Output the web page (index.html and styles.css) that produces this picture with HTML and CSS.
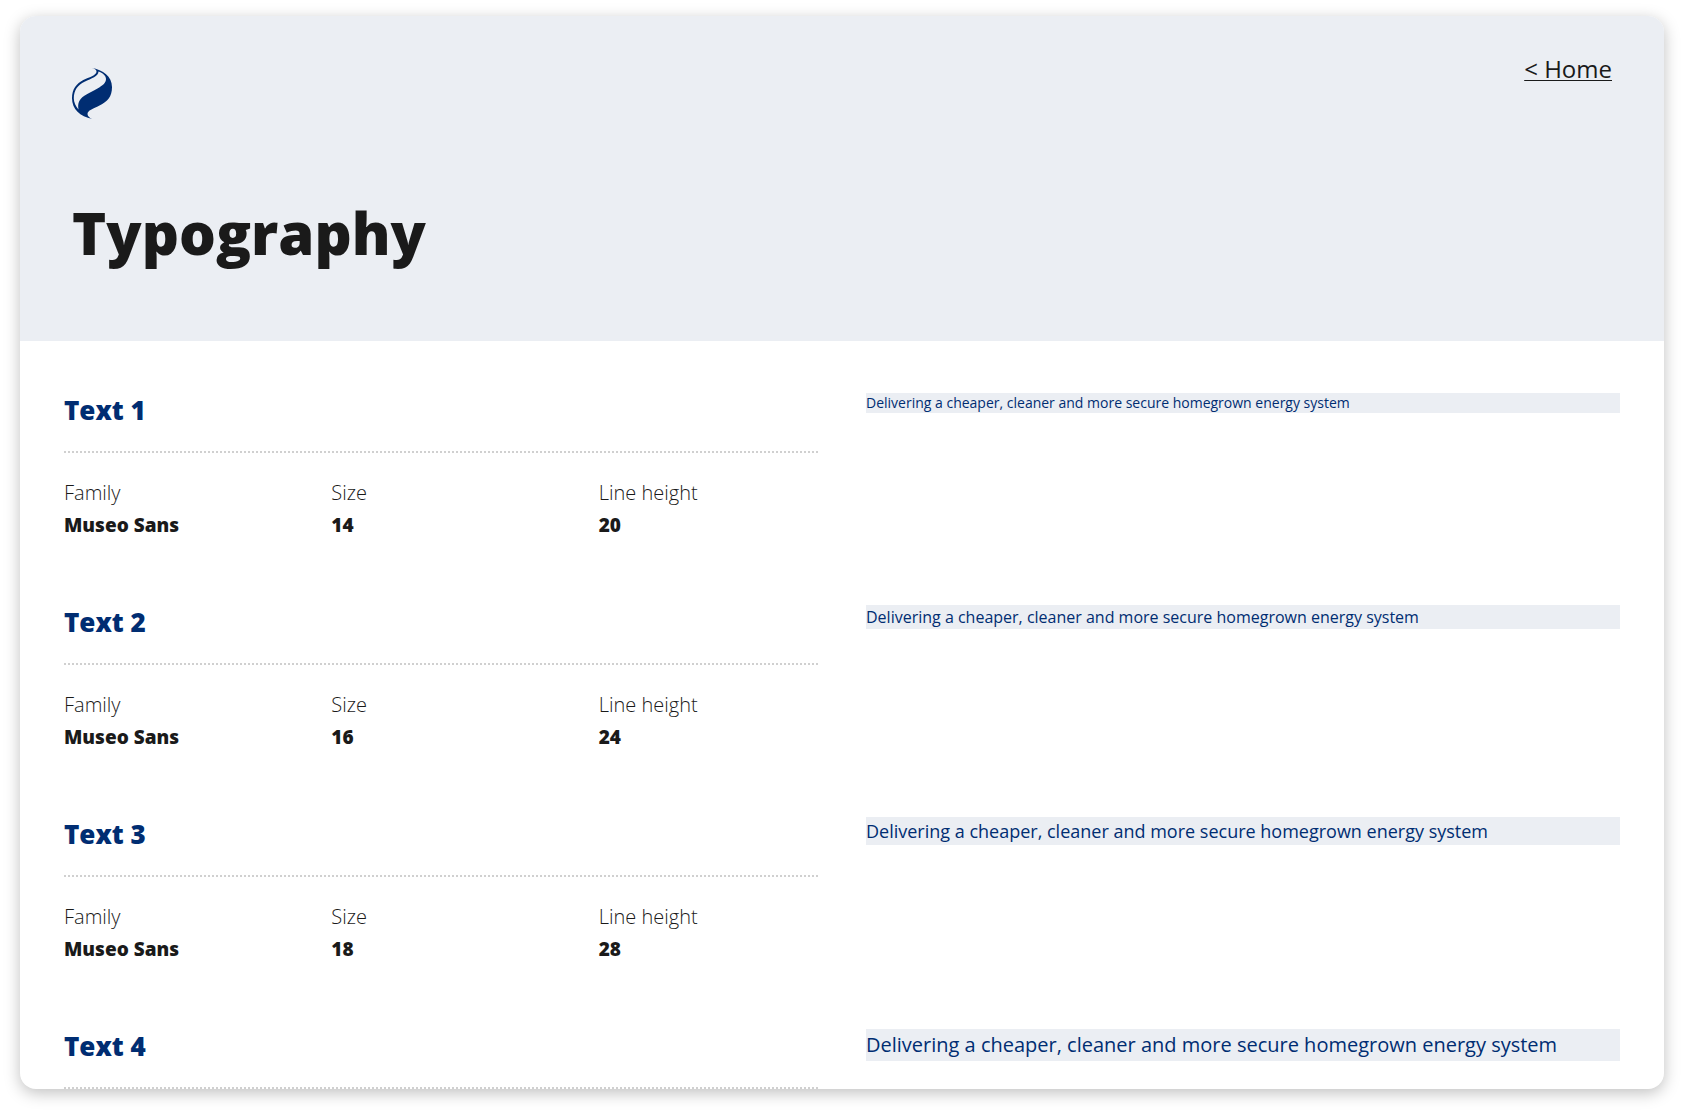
FILE: index.html
```
<!DOCTYPE html>
<html lang="en">
<head>
    <meta charset="UTF-8">
    <meta name="viewport" content="width=device-width, initial-scale=1.0">
    <title>Typography</title>
    <link rel="stylesheet" href="styles.css">
</head>
<body>
    <div class="page">
        <header class="header">
            <div class="header-top">
                <svg class="logo" viewBox="0 0 40 51" aria-hidden="true">
                    <path fill-rule="evenodd" d="M19.500 0C31 1.500 40 8.500 40 19C40 29 35.500 33.500 27.500 37.500C21 40.700 15.500 42.500 15.500 46C15.500 48.500 18 50 20.300 51C8 48.800 0 41 0 30.300C0 21 4.500 15.500 11.300 12C17 9.200 24.500 7.500 24.500 3.500C24.500 1.500 22.500 .5 19.500 0ZM26.500 3.500C26.300 8.300 19.500 10.600 12.500 13.700C6 16.800 1.800 22 1.800 30.300C1.800 34.500 3.800 38.500 6.500 41.500C5.500 35.500 7 31.500 12 28C16.500 25 20.500 23.500 25.500 20.500C30.500 17.500 34 15 34 11C34 7.500 30.500 5 26.500 3.500Z"/>
                </svg>
                <a class="home-link" href="#">&lt; Home</a>
            </div>
            <h1>Typography</h1>
        </header>

        <main class="content">
            <section class="type-row">
                <div class="details">
                    <h2>Text 1</h2>
                    <dl class="specs">
                        <div><dt>Family</dt><dd>Museo Sans</dd></div>
                        <div><dt>Size</dt><dd>14</dd></div>
                        <div><dt>Line height</dt><dd>20</dd></div>
                    </dl>
                </div>
                <p class="sample text-1">Delivering a cheaper, cleaner and more secure homegrown energy system</p>
            </section>

            <section class="type-row">
                <div class="details">
                    <h2>Text 2</h2>
                    <dl class="specs">
                        <div><dt>Family</dt><dd>Museo Sans</dd></div>
                        <div><dt>Size</dt><dd>16</dd></div>
                        <div><dt>Line height</dt><dd>24</dd></div>
                    </dl>
                </div>
                <p class="sample text-2">Delivering a cheaper, cleaner and more secure homegrown energy system</p>
            </section>

            <section class="type-row">
                <div class="details">
                    <h2>Text 3</h2>
                    <dl class="specs">
                        <div><dt>Family</dt><dd>Museo Sans</dd></div>
                        <div><dt>Size</dt><dd>18</dd></div>
                        <div><dt>Line height</dt><dd>28</dd></div>
                    </dl>
                </div>
                <p class="sample text-3">Delivering a cheaper, cleaner and more secure homegrown energy system</p>
            </section>

            <section class="type-row">
                <div class="details">
                    <h2>Text 4</h2>
                </div>
                <p class="sample text-4">Delivering a cheaper, cleaner and more secure homegrown energy system</p>
            </section>
        </main>
    </div>
</body>
</html>
```
FILE: styles.css
```
* {
    box-sizing: border-box;
}
body {
    margin: 0;
    padding: 16px 20px 24px;
    height: 100vh;
    font-family: "Museo Sans", "Open Sans", sans-serif;
    color: #1a1a1a;
    background: white;
}
h1, h2, p, dl, dd {
    margin: 0;
}
.page {
    height: 100%;
    overflow: hidden;
    background: white;
    border-radius: 16px;
    box-shadow: 0 4px 16px rgba(0,0,0,0.25);
}
.header {
    padding: 36px 52px 68px;
    background: #ebeef3;
}
.header-top {
    display: flex;
    justify-content: space-between;
    align-items: flex-start;
}
.logo {
    width: 40px;
    height: 51px;
    margin-top: 16px;
    fill: #002d72;
}
.home-link {
    color: #1a1a1a;
    font-size: 24px;
    line-height: 34px;
    text-underline-offset: 2px;
    text-decoration-thickness: 1px;
}
h1 {
    margin-top: 74px;
    font-size: 58px;
    line-height: 80px;
    font-weight: 800;
}
.content {
    padding: 52px 44px;
}
.type-row {
    display: grid;
    grid-template-columns: 1fr 1fr;
    gap: 48px;
    align-items: start;
    padding-bottom: 64px;
}
h2 {
    padding-bottom: 24px;
    border-bottom: 2px dotted #d0d0d0;
    font-size: 26px;
    line-height: 34px;
    font-weight: 800;
    color: #002d72;
}
.specs {
    display: grid;
    grid-template-columns: repeat(3, 1fr);
    gap: 48px;
    padding-top: 24px;
    font-size: 20px;
    line-height: 32px;
}
dt {
    font-weight: 300;
}
dd {
    font-size: 19px;
    font-weight: 800;
}
.sample {
    color: #002d72;
    background: #ebeef3;
}
.text-1 {
    font-size: 14px;
    line-height: 20px;
}
.text-2 {
    font-size: 16px;
    line-height: 24px;
}
.text-3 {
    font-size: 18px;
    line-height: 28px;
}
.text-4 {
    font-size: 20px;
    line-height: 32px;
}
```
